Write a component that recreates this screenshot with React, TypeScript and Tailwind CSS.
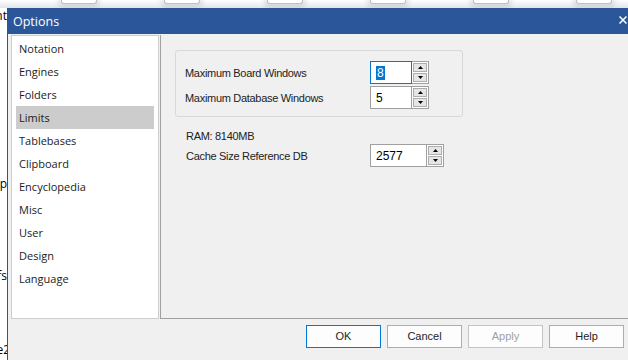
import React from "react";

const navItems = [
  "Notation",
  "Engines",
  "Folders",
  "Limits",
  "Tablebases",
  "Clipboard",
  "Encyclopedia",
  "Misc",
  "User",
  "Design",
  "Language",
];

const bgTabs = [0, 1, 2, 3, 4, 5];

const Arrow = ({ up }: { up?: boolean }) => (
  <svg width="5" height="3" viewBox="0 0 5 3">
    <path d={up ? "M0 3L2.5 0L5 3Z" : "M0 0L5 0L2.5 3Z"} fill="#000" />
  </svg>
);

interface SpinProps {
  value: string;
  textWidth: string;
  focused?: boolean;
}

const SpinBox: React.FC<SpinProps> = ({ value, textWidth, focused }) => (
  <div className="flex h-[23px]">
    <div
      className={`flex items-center border bg-white pl-[5px] font-['Liberation_Sans',Arial,sans-serif] text-[12px] tracking-normal text-black ${textWidth} ${
        focused ? "border-[#0078d7]" : "border-[#a0a0a0]"
      }`}
    >
      {focused ? (
        <span className="bg-[#0078d7] px-[1px] leading-[14px] text-white">{value}</span>
      ) : (
        <span>{value}</span>
      )}
    </div>
    <div className="flex w-[17px] flex-col gap-[1px] border border-l-0 border-[#a0a0a0] bg-white p-[1px]">
      <div className="flex flex-1 items-center justify-center border border-[#adadad] bg-[#e5e5e5]">
        <Arrow up />
      </div>
      <div className="flex flex-1 items-center justify-center border border-[#adadad] bg-[#e5e5e5]">
        <Arrow />
      </div>
    </div>
  </div>
);

const DlgButton = ({ label, primary, disabled }: { label: string; primary?: boolean; disabled?: boolean }) => (
  <button
    className={`flex h-[23px] w-[75px] items-center justify-center border bg-[#fdfdfd] font-['Liberation_Sans',Arial,sans-serif] text-[11px] ${
      primary ? "border-[#0078d7]" : disabled ? "border-[#c4c4c4]" : "border-[#adadad]"
    } ${disabled ? "text-[#a0a0a0]" : "text-[#1e1e1e]"}`}
  >
    {label}
  </button>
);

export default function App() {
  return (
    <div className="flex h-[360px] w-[628px] flex-col overflow-hidden bg-white">
      {/* window behind the dialog */}
      <div className="flex h-[8px] shrink-0 gap-[67px] bg-gradient-to-b from-white to-[#e2e6ea] pl-[61px]">
        {bgTabs.map((t) => (
          <div
            key={t}
            className="h-[4px] w-[36px] rounded-b-[3px] border border-t-0 border-[#c0c0c0] bg-white shadow-[0_1px_5px_3px_rgba(0,0,0,0.1)]"
          />
        ))}
      </div>

      <div className="flex min-h-0 flex-1">
        {/* text of the window behind, cut by the dialog */}
        <div className="flex w-[7px] shrink-0 flex-col items-end overflow-hidden whitespace-nowrap font-['Open_Sans',sans-serif] text-[12px] leading-[16px] text-black">
          <div className="h-[16px]">Content</div>
          <div className="mt-[152px] h-[16px]">Setup</div>
          <div className="mt-[76px] h-[16px]">Prefs</div>
          <div className="mr-[-3px] mt-[58px] h-[16px]">Rule2</div>
        </div>

        {/* Options dialog */}
        <div className="flex min-w-0 flex-1 flex-col">
          <div className="flex h-[26px] shrink-0 items-center justify-between bg-[#2b579a] pl-[6px] pr-[1px] text-white">
            <span className="pt-[2px] font-['Open_Sans',sans-serif] text-[12.5px]">Options</span>
            <svg width="8" height="8" viewBox="0 0 8 8" className="mb-[3px]">
              <path d="M0.5 0.5L7.5 7.5M7.5 0.5L0.5 7.5" stroke="#fff" strokeWidth="1.5" />
            </svg>
          </div>

          <div className="flex flex-1 flex-col border-l border-[#2b579a] bg-[#f0f0f0] pl-[3px] pt-[1px]">
            <div className="flex h-[284px]">
              {/* Page list */}
              <div className="w-[148px] border border-[#cdcdcd] bg-white px-[4px] pt-[1px]">
                {navItems.map((item) => (
                  <div
                    key={item}
                    className={`flex h-[23px] items-center pl-[3px] pt-[2px] font-['Open_Sans',sans-serif] text-[11px] text-[#1b1b1b] ${
                      item === "Limits" ? "bg-[#cccccc]" : ""
                    }`}
                  >
                    {item}
                  </div>
                ))}
              </div>

              {/* Limits page */}
              <div className="ml-[1px] flex-1 border-b border-l border-[#a0a0a0] pl-[14px] pt-[15px] font-['Liberation_Sans',Arial,sans-serif] text-[11px] tracking-[-0.3px] text-[#222]">
                <div className="w-[288px] rounded-[3px] border border-[#d8d8d8] pb-[7px] pl-[9px] pt-[10px]">
                  <div className="grid grid-cols-[185px_auto] items-center gap-y-[2px]">
                    <span className="pt-[2px]">Maximum Board Windows</span>
                    <SpinBox value="8" textWidth="w-[42px]" focused />
                    <span className="pt-[2px]">Maximum Database Windows</span>
                    <SpinBox value="5" textWidth="w-[42px]" />
                  </div>
                </div>

                <div className="mt-[12px] pl-[11px]">
                  <div className="h-[15px] leading-[15px]">RAM: 8140MB</div>
                  <div className="grid grid-cols-[184px_auto] items-center">
                    <span className="pt-[1px]">Cache Size Reference DB</span>
                    <SpinBox value="2577" textWidth="w-[57px]" />
                  </div>
                </div>
              </div>
            </div>

            <div className="mt-[6px] flex justify-end gap-[6px] pr-[4px]">
              <DlgButton label="OK" primary />
              <DlgButton label="Cancel" />
              <DlgButton label="Apply" disabled />
              <DlgButton label="Help" />
            </div>
          </div>
        </div>
      </div>
    </div>
  );
}
